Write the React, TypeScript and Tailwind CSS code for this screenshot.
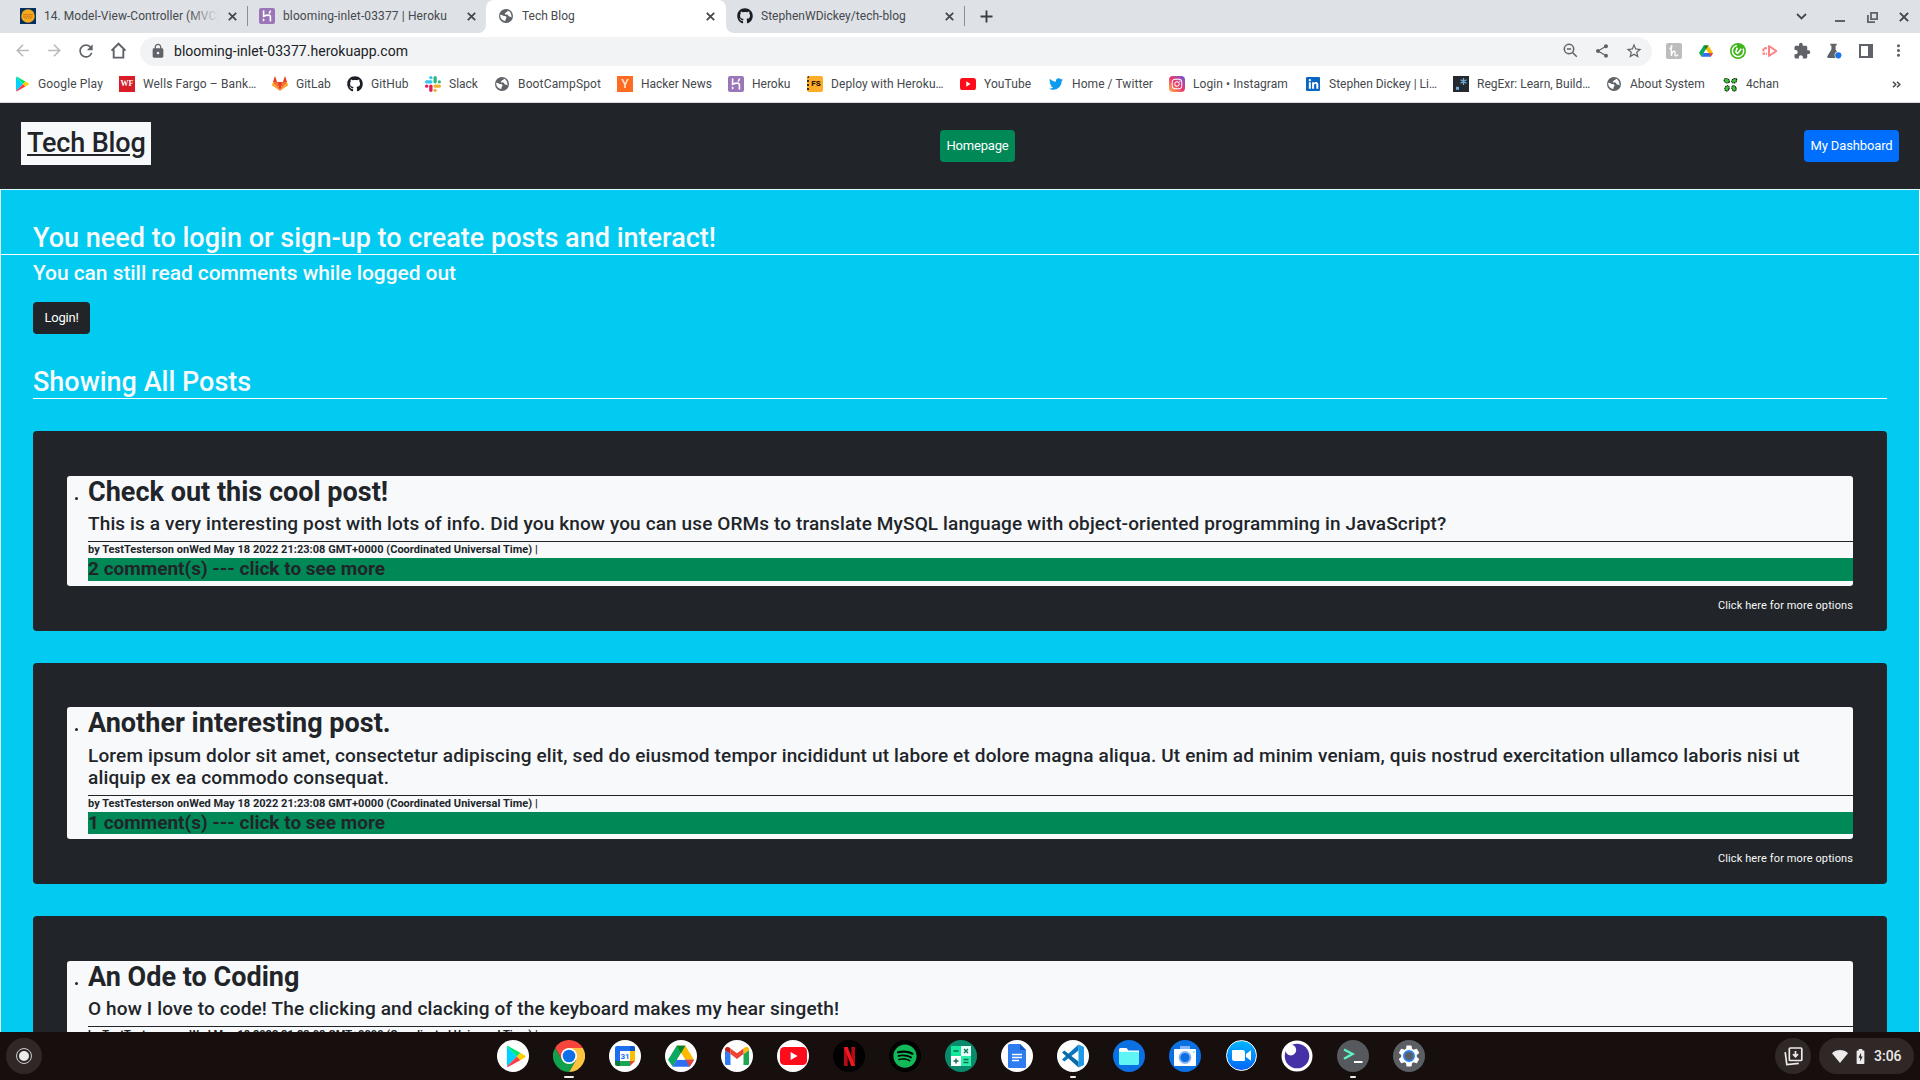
import type { ReactNode } from 'react'
import {
  MdArrowBack,
  MdArrowForward,
  MdRefresh,
  MdLock,
  MdShare,
  MdStarBorder,
  MdExtension,
  MdMoreVert,
  MdSettings,
} from 'react-icons/md'
import { FaGithub, FaTwitter, FaSpotify, FaInstagram, FaLinkedinIn } from 'react-icons/fa'

/* ---------- icons ---------- */

function Close({ w = 9, s = 1.8 }: { w?: number; s?: number }) {
  return (
    <svg width={w} height={w} viewBox="0 0 9 9" fill="none" stroke="#45494d" strokeWidth={s}>
      <path d="M.8.8l7.4 7.4M8.2.8L.8 8.2" />
    </svg>
  )
}

function Globe() {
  return (
    <svg width="14" height="14" viewBox="0 0 14 14">
      <circle cx="7" cy="7" r="7" fill="#5f6368" />
      <path
        d="M1.200 5.800l1.500.1c1 .1 1.300.9 2.200 1.100.9.200 1.900 0 2.400.8.400.7.100 1.400-.4 1.900-.5.500-.3 1.300-.6 2.200-2.700.2-5.400-2.700-5.100-6.100z"
        fill="#fff"
      />
      <path
        d="M8.700 1.400c.2 1-.3 1.500-1.200 1.700-.7.200-.6 1-1.300 1.200-.5.200-.6.700-.2 1 .8.400 2-.1 2.800.5.600.5.500 1.300 1.100 1.700.8.500 1.700.2 2.500.9.500-2.900-1-6-3.700-7z"
        fill="#fff"
      />
    </svg>
  )
}

function HerokuIcon() {
  return (
    <svg width="16" height="16" viewBox="0 0 16 16">
      <rect width="16" height="16" rx="2" fill="#9a76b8" />
      <path d="M4.600 2.500v5.800c2-.9 3.400-1.200 4.600-1.200 1.700 0 2.200.9 2.200 2v4.400M11.400 2.500c-.1 1.200-.6 2.100-1.300 3" fill="none" stroke="#fff" strokeWidth="1.600" />
      <path d="M3.800 10.200l2.200 1.800-2.200 1.800z" fill="#fff" />
    </svg>
  )
}

function PlayIcon({ size }: { size: number }) {
  return (
    <svg width={size} height={size} viewBox="0 0 24 24">
      <path d="M3 1.500v21L13.500 12z" fill="#00d2ff" />
      <path d="M3 1.500L13.500 12l3.600-3.800L4.600 1.200C4 .9 3.300 1 3 1.500z" fill="#00e676" />
      <path d="M3 22.500L13.500 12l3.600 3.800-12.500 7C4 23.100 3.300 23 3 22.500z" fill="#ff3a44" />
      <path d="M17.100 8.200L13.500 12l3.600 3.800 4.700-2.700c.9-.5.9-1.700 0-2.200z" fill="#ffd000" />
    </svg>
  )
}

function GitlabIcon() {
  return (
    <svg width="16" height="16" viewBox="0 0 24 24">
      <path d="M12 22.500L16.400 9H7.600z" fill="#e24329" />
      <path d="M12 22.500L7.600 9H1.400zM12 22.500L16.400 9h6.200z" fill="#fc6d26" />
      <path d="M1.400 9L.1 13.100c-.1.400 0 .8.300 1L12 22.500zM22.600 9l1.300 4.100c.1.400 0 .8-.3 1L12 22.500z" fill="#fca326" />
      <path d="M1.400 9h6.200L5 1c-.2-.5-.8-.5-1 0zM22.600 9h-6.200L19 1c.2-.5.800-.5 1 0z" fill="#e24329" />
    </svg>
  )
}

function SlackIcon() {
  return (
    <svg width="16" height="16" viewBox="0 0 24 24">
      <g fill="#e01e5a">
        <circle cx="2.500" cy="15.200" r="2.500" />
        <rect x="6.300" y="12.700" width="5" height="11.300" rx="2.500" />
      </g>
      <g fill="#36c5f0">
        <circle cx="8.800" cy="2.500" r="2.500" />
        <rect x="0" y="6.300" width="11.300" height="5" rx="2.500" />
      </g>
      <g fill="#2eb67d">
        <circle cx="21.500" cy="8.800" r="2.500" />
        <rect x="12.700" y="0" width="5" height="11.300" rx="2.500" />
      </g>
      <g fill="#ecb22e">
        <circle cx="15.200" cy="21.500" r="2.500" />
        <rect x="12.700" y="12.700" width="11.300" height="5" rx="2.500" />
      </g>
    </svg>
  )
}

function YoutubeIcon({ w, h }: { w: number; h: number }) {
  return (
    <svg width={w} height={h} viewBox="0 0 28 19" preserveAspectRatio="none">
      <rect width="28" height="19" rx="4.500" fill="#fd0d1b" />
      <path d="M11 5.300v8.400l7.200-4.200z" fill="#fff" />
    </svg>
  )
}

function DriveIcon({ size }: { size: number }) {
  return (
    <svg width={size} height={size} viewBox="0 0 24 24">
      <path d="M8 2.500h8L12 9.400 4.300 22 0 15.500z" fill="#0da960" />
      <path d="M8 2.500h8l8 13h-8z" fill="#ffba00" />
      <path d="M8 15.500h16L20 22H4.300z" fill="#2d6ff0" />
      <path d="M16.300 15.500H24L20 22z" fill="#ea4335" />
      <path d="M8 2.500h8l-4 6.900z" fill="#00832d" />
      <path d="M12 9.400l3.700 6.100H8.200z" fill="#fff" />
    </svg>
  )
}

function CloverIcon() {
  return (
    <svg width="15" height="15" viewBox="0 0 16 16" fill="#3fc63b" stroke="#0c1a0b" strokeWidth="1.100" strokeDasharray="1.500 .6">
      <ellipse cx="4" cy="4" rx="3" ry="2.200" transform="rotate(25 4 4)" />
      <ellipse cx="12" cy="4" rx="3" ry="2.200" transform="rotate(-35 12 4)" />
      <ellipse cx="4.300" cy="12" rx="2.200" ry="3" transform="rotate(25 4 12)" />
      <ellipse cx="11.700" cy="12" rx="2.200" ry="3" transform="rotate(-25 12 12)" />
    </svg>
  )
}

/* ---------- browser chrome ---------- */

function Tab({ icon, title, fade, tracking = '' }: { icon: ReactNode; title: string; fade?: boolean; tracking?: string }) {
  return (
    <div className="flex w-[220px] shrink-0 items-center">
      <span className="flex w-4 shrink-0 justify-center">{icon}</span>
      <span className={`relative ml-2 w-[175px] overflow-hidden whitespace-nowrap text-[12px] leading-4 text-[#45494d] ${tracking}`}>
        {title}
        {fade && <span className="absolute right-0 top-0 h-4 w-8 bg-gradient-to-r from-transparent to-[#dee1e6]" />}
      </span>
      <span className="ml-auto flex w-4 justify-center">
        <Close />
      </span>
    </div>
  )
}

function TabStrip() {
  return (
    <div className="flex h-[33px] bg-[#dee1e6]">
      <div className="w-[486px] bg-white">
        <div className="flex h-[33px] rounded-br-lg bg-[#dee1e6] pb-[1px] pl-5">
          <Tab
            fade
            tracking="tracking-[0.05px]"
            title="14. Model-View-Controller (MVC)"
            icon={
              <svg width="16" height="16" viewBox="0 0 16 16">
                <rect width="16" height="16" fill="#052f5f" />
                <circle cx="8" cy="8" r="6.800" fill="#f5a81c" />
                <path d="M3.500 6.500h9M3 8.200h10M4 10h8" stroke="#c26a1c" strokeWidth="1" strokeDasharray="1.400 .6" />
              </svg>
            }
          />
          <span className="ml-[7px] mt-[6px] h-5 w-px bg-[#8a8d91]" />
          <span className="ml-[11px] flex">
            <Tab title="blooming-inlet-03377 | Heroku" tracking="tracking-[0.12px]" icon={<HerokuIcon />} />
          </span>
        </div>
      </div>
      <div className="flex w-[240px] rounded-t-lg bg-white pb-[1px] pl-3">
        <Tab title="Tech Blog" icon={<Globe />} />
      </div>
      <div className="flex-1 bg-white">
        <div className="flex h-[33px] items-center rounded-bl-lg bg-[#dee1e6] pb-[1px] pl-[11px]">
          <Tab title="StephenWDickey/tech-blog" tracking="tracking-[0.03px]" icon={<FaGithub className="size-4 text-[#1b1f23]" />} />
          <span className="ml-[7px] h-5 w-px bg-[#8a8d91]" />
          <svg className="ml-[15px]" width="13" height="13" viewBox="0 0 13 13" stroke="#3c4043" strokeWidth="1.900">
            <path d="M6.500.5v12M.5 6.500h12" />
          </svg>
          <div className="ml-auto flex items-center pr-[11px]">
            <svg width="11" height="7" viewBox="0 0 11 7" fill="none" stroke="#45494d" strokeWidth="1.800">
              <path d="M1 1l4.500 4.500L10 1" />
            </svg>
            <span className="ml-[28px] mt-[9px] h-[2px] w-[10px] bg-[#5f6368]" />
            <svg className="ml-[22px] mt-[2px]" width="11" height="11" viewBox="0 0 11 11" fill="none" stroke="#5f6368" strokeWidth="1.800">
              <path d="M4 .9h6.100v6.200H4zM.9 3v7.100H8" />
            </svg>
            <span className="ml-[21px] mt-[2px]">
              <Close w={10} s={1.8} />
            </span>
          </div>
        </div>
      </div>
    </div>
  )
}

function Slot({ children }: { children: ReactNode }) {
  return <span className="flex w-8 shrink-0 items-center justify-center pb-[2px]">{children}</span>
}

function Toolbar() {
  return (
    <div className="flex h-[37px] items-center bg-white pl-[6px] text-[#5f6368]">
      <Slot>
        <MdArrowBack className="size-[19px] text-[#bababc]" />
      </Slot>
      <Slot>
        <MdArrowForward className="size-[19px] text-[#bababc]" />
      </Slot>
      <Slot>
        <MdRefresh className="size-5" />
      </Slot>
      <Slot>
        <svg width="17" height="17" viewBox="0 0 17 17" fill="none" stroke="#5f6368" strokeWidth="1.900">
          <path d="M1.500 8.600L8.500 1.700l7 6.900M3.700 7.500v8.100h9.600V7.500" />
        </svg>
      </Slot>
      <div className="ml-[6px] flex h-[29px] w-[1512px] items-center rounded-full bg-[#f1f3f4] pl-[10px]">
        <MdLock className="mb-[2px] size-4" />
        <span className="ml-2 pb-[2px] text-[14px] leading-5 tracking-[0.03px] text-[#202124]">blooming-inlet-03377.herokuapp.com</span>
        <div className="ml-auto flex pr-[2px]">
          <Slot>
            <svg width="15" height="15" viewBox="0 0 15 15" fill="none" stroke="#5f6368" strokeWidth="1.500">
              <circle cx="6" cy="6" r="4.700" />
              <path d="M9.500 9.500l4.300 4.300M3.900 6h4.200" />
            </svg>
          </Slot>
          <Slot>
            <MdShare className="size-4" />
          </Slot>
          <Slot>
            <MdStarBorder className="size-[18px]" />
          </Slot>
        </div>
      </div>
      <div className="ml-[6px] flex">
        <Slot>
          <svg width="16" height="16" viewBox="0 0 16 16">
            <rect width="16" height="16" rx="2" fill="#bdbdbd" />
            <path d="M4 5.500c1.500-.5 2.300-2.700 1.600-2.900-.5 0-.4 2.400-.3 5.400l.1 4.800c.3-2.600 1.500-4.600 2.700-4.600 1.500 0 .5 3 1 4.100.4.900 1.800.7 2.600-.4" fill="none" stroke="#fff" strokeWidth="1.400" strokeLinecap="round" />
          </svg>
        </Slot>
        <Slot>
          <DriveIcon size={14} />
        </Slot>
        <Slot>
          <svg width="16" height="16" viewBox="0 0 16 16">
            <circle cx="8" cy="8" r="8" fill="#3fb618" />
            <circle cx="8" cy="8" r="5.600" fill="none" stroke="#fff" strokeWidth="1.500" strokeDasharray="27 8.200" transform="rotate(-25 8 8)" />
            <path d="M7.300 4.800L6 8.300c-.3 1.500 1.300 2.300 2.400 1.400l2.800-4" fill="none" stroke="#fff" strokeWidth="1.600" />
          </svg>
        </Slot>
        <Slot>
          <svg width="16" height="14" viewBox="0 0 16 14" fill="none" stroke="#ff8080" strokeWidth="2">
            <path d="M7 2l7.300 5L7 12z" strokeLinejoin="round" />
            <path d="M5 4.300H1.500v5.400H5" strokeDasharray="3 .8" />
          </svg>
        </Slot>
        <Slot>
          <MdExtension className="size-[18px]" />
        </Slot>
        <Slot>
          <svg width="16" height="16" viewBox="0 0 16 16">
            <path d="M4.300.8h6.400v1.800H9.600v4l4 6.500c.6 1-.1 2-1.100 2H2.500c-1 0-1.700-1-1.100-2l4-6.500v-4H4.300z" fill="#5f6368" />
            <circle cx="12.300" cy="12.300" r="3.700" fill="#fff" />
            <circle cx="12.300" cy="12.300" r="3.100" fill="#1a73e8" />
          </svg>
        </Slot>
        <Slot>
          <svg width="14" height="14" viewBox="0 0 14 14">
            <path d="M1 1h12v12H1z" fill="none" stroke="#5f6368" strokeWidth="2" />
            <path d="M9 1h4v12H9z" fill="#5f6368" />
          </svg>
        </Slot>
        <Slot>
          <MdMoreVert className="size-[19px]" />
        </Slot>
      </div>
    </div>
  )
}

const bookmarks: { label: string; w: string; icon: ReactNode }[] = [
  { label: 'Google Play', w: 'w-[65px] tracking-[0.14px]', icon: <PlayIcon size={16} /> },
  {
    label: 'Wells Fargo – Bank…',
    w: 'w-[113px] tracking-[0.13px]',
    icon: (
      <span className="flex size-4 items-center justify-center bg-[#d71e28] font-['Liberation_Serif'] text-[8px] font-bold text-white">WF</span>
    ),
  },
  { label: 'GitLab', w: 'w-[35px]', icon: <GitlabIcon /> },
  { label: 'GitHub', w: 'w-[38px] tracking-[0.1px]', icon: <FaGithub className="size-4 text-[#1b1f23]" /> },
  { label: 'Slack', w: 'w-[29px]', icon: <SlackIcon /> },
  { label: 'BootCampSpot', w: 'w-[83px] tracking-[0.15px]', icon: <Globe /> },
  {
    label: 'Hacker News',
    w: 'w-[71px]',
    icon: <span className="flex size-4 items-center justify-center bg-[#ff6c21] text-[12px] leading-4 text-white">Y</span>,
  },
  { label: 'Heroku', w: 'w-[39px]', icon: <HerokuIcon /> },
  {
    label: 'Deploy with Heroku…',
    w: 'w-[113px] tracking-[0.08px]',
    icon: (
      <span className="flex size-4 items-center justify-center rounded-[2px] border-l-2 border-dotted border-[#3d2b10] bg-[#ffad29] text-[8px] font-black leading-4 text-[#2a1c08]">
        FS
      </span>
    ),
  },
  { label: 'YouTube', w: 'w-[48px] tracking-[0.1px]', icon: <YoutubeIcon w={16} h={12} /> },
  { label: 'Home / Twitter', w: 'w-[81px] tracking-[0.07px]', icon: <FaTwitter className="size-[14px] text-[#0d9bf0]" /> },
  {
    label: 'Login • Instagram',
    w: 'w-[96px] tracking-[0.07px]',
    icon: (
      <span className="flex size-4 items-center justify-center rounded bg-gradient-to-tr from-[#fdb03c] via-[#e8316c] to-[#6a45dc]">
        <FaInstagram className="size-3 text-white" />
      </span>
    ),
  },
  {
    label: 'Stephen Dickey | Li…',
    w: 'w-[108px]',
    icon: (
      <span className="flex size-[14px] items-center justify-center rounded-[1px] bg-[#0a66c2]">
        <FaLinkedinIn className="size-[11px] text-white" />
      </span>
    ),
  },
  {
    label: 'RegExr: Learn, Build…',
    w: 'w-[113px]',
    icon: (
      <svg width="16" height="16" viewBox="0 0 16 16">
        <rect width="16" height="16" fill="#23292f" />
        <path d="M10.500 2v7M7.500 3.700l6 3.500M13.500 3.700l-6 3.500" stroke="#70b0e0" strokeWidth="1.300" />
        <rect x="3" y="10.800" width="3" height="3" fill="#70b0e0" />
      </svg>
    ),
  },
  { label: 'About System', w: 'w-[76px]', icon: <Globe /> },
  { label: '4chan', w: 'w-[34px]', icon: <CloverIcon /> },
]

function BookmarksBar() {
  return (
    <div className="flex h-[33px] items-center border-b border-[#d5d7da] bg-white pb-[4px] pl-[14px]">
      <div className="flex gap-4">
        {bookmarks.map((b) => (
          <div key={b.label} className="flex items-center gap-2">
            <span className="flex w-4 shrink-0 justify-center">{b.icon}</span>
            <span className={`whitespace-nowrap text-[12px] leading-4 text-[#45494d] ${b.w}`}>{b.label}</span>
          </div>
        ))}
      </div>
      <svg className="ml-auto mr-[19px]" width="9" height="7" viewBox="0 0 9 7" fill="none" stroke="#45494d" strokeWidth="1.500">
        <path d="M1 .7l2.800 2.800L1 6.300M5 .7l2.800 2.800L5 6.300" />
      </svg>
    </div>
  )
}

/* ---------- web page ---------- */

interface Post {
  title: string
  body: string
  comments?: number
  bodyBox: string
  barBox: string
}

const posts: Post[] = [
  {
    title: 'Check out this cool post!',
    body: 'This is a very interesting post with lots of info. Did you know you can use ORMs to translate MySQL language with object-oriented programming in JavaScript?',
    comments: 2,
    bodyBox: 'h-[33px] pt-[5px] tracking-[0.12px]',
    barBox: 'h-[23px]',
  },
  {
    title: 'Another interesting post.',
    body: 'Lorem ipsum dolor sit amet, consectetur adipiscing elit, sed do eiusmod tempor incididunt ut labore et dolore magna aliqua. Ut enim ad minim veniam, quis nostrud exercitation ullamco laboris nisi ut aliquip ex ea commodo consequat.',
    comments: 1,
    bodyBox: 'h-14 pt-[6px] tracking-[0.155px]',
    barBox: 'h-[22px]',
  },
  {
    title: 'An Ode to Coding',
    body: 'O how I love to code! The clicking and clacking of the keyboard makes my hear singeth!',
    bodyBox: 'h-[33px] pt-[5px] tracking-[0.145px]',
    barBox: 'h-[23px]',
  },
]

function PostCard({ post, top }: { post: Post; top: string }) {
  return (
    <article className={`mb-8 rounded bg-[#212529] px-[34px] pb-[14px] ${top}`}>
      <div className="flex rounded-[3px] bg-[#f8f9fb] pb-[5px] pl-2">
        <span className="mt-[21px] size-[3px] rounded-full bg-[#212529]" />
        <div className="ml-[10px] flex-1 text-[#212529]">
          <h2 className="h-8 text-[27px] font-bold leading-8 tracking-[0.01px]">{post.title}</h2>
          <p className={`text-[19px] font-medium leading-[22px] ${post.bodyBox}`}>{post.body}</p>
          <p className="h-[17px] border-t border-[#212529] text-[11px] font-bold leading-[15px] tracking-[0.035px]">
            by TestTesterson onWed May 18 2022 21:23:08 GMT+0000 (Coordinated Universal Time) |
          </p>
          {post.comments !== undefined && (
            <p className={`bg-[#008857] text-[19px] font-bold leading-[22px] ${post.barBox}`}>{post.comments} comment(s) --- click to see more</p>
          )}
        </div>
      </div>
      {post.comments !== undefined && (
        <p className="mt-3 h-[19px] text-right text-[11px] leading-4 tracking-[0.11px] text-[#f8f9fa]">Click here for more options</p>
      )}
    </article>
  )
}

function WebPage() {
  return (
    <div className="flex h-[929px] flex-col overflow-hidden">
      <header className="flex h-[86px] shrink-0 items-start justify-between bg-[#212529] px-[21px] pt-[19px]">
        <div className="h-[43px] w-[130px] bg-[#f8f9fb] pl-[6px] pt-[5px] text-[27px] font-medium leading-8 tracking-[-0.15px] text-[#212529] underline decoration-2 underline-offset-2">
          Tech Blog
        </div>
        <button className="mt-2 h-8 w-[75px] rounded bg-[#008857] text-[13px] tracking-[-0.17px] text-white">Homepage</button>
        <button className="mt-2 h-8 w-[95px] rounded bg-[#006ffd] text-[13px] tracking-[-0.13px] text-white">My Dashboard</button>
      </header>
      <main className="flex-1 border border-b-0 border-[#e4f8fd] bg-[#02cbf1] pt-8 text-[#f8f9fa]">
        <h1 className="border-b border-white pl-8 text-[27px] font-medium leading-8 tracking-[0.015px]">
          You need to login or sign-up to create posts and interact!
        </h1>
        <div className="px-8">
          <h3 className="mt-[6px] h-6 text-[21px] font-medium leading-[25px] tracking-[-0.066px]">You can still read comments while logged out</h3>
          <button className="mt-[17px] block h-8 w-[57px] rounded bg-[#212529] text-[13px] tracking-[-0.2px] text-white">Login!</button>
          <h1 className="mb-8 mt-8 border-b border-white text-[27px] font-medium leading-8">Showing All Posts</h1>
          <PostCard post={posts[0]} top="pt-[45px]" />
          <PostCard post={posts[1]} top="pt-11" />
          <PostCard post={posts[2]} top="pt-[45px]" />
        </div>
      </main>
    </div>
  )
}

/* ---------- shelf ---------- */

function Round({ bg, children }: { bg: string; children?: ReactNode }) {
  return <span className={`flex size-8 items-center justify-center overflow-hidden rounded-full ${bg}`}>{children}</span>
}

const apps: { id: string; icon: ReactNode; mark?: string }[] = [
  {
    id: 'play',
    icon: (
      <Round bg="bg-white">
        <span className="ml-1 flex">
          <PlayIcon size={23} />
        </span>
      </Round>
    ),
  },
  {
    id: 'chrome',
    mark: 'w-[10px]',
    icon: (
      <svg width="32" height="32" viewBox="0 0 48 48">
        <path d="M3.200 12A24 24 0 0 1 44.800 12H24L13.600 30z" fill="#f6453c" />
        <path d="M44.800 12A24 24 0 0 1 24 48l10.400-18L24 12z" fill="#fcc43f" />
        <path d="M24 48A24 24 0 0 1 3.200 12l10.400 18h20.800z" fill="#11a04b" />
        <circle cx="24" cy="24" r="12" fill="#fff" />
        <circle cx="24" cy="24" r="9.500" fill="#0e6fe8" />
      </svg>
    ),
  },
  {
    id: 'calendar',
    icon: (
      <Round bg="bg-white">
        <svg width="20" height="20" viewBox="0 0 20 20">
          <path d="M2 0h16a2 2 0 0 1 2 2v13H0V2a2 2 0 0 1 2-2z" fill="#1c6fee" />
          <path d="M15 5h5v10h-5z" fill="#fbbc04" />
          <path d="M15 0h3a2 2 0 0 1 2 2v3h-5z" fill="#1058c8" />
          <path d="M5 15h10v5H5z" fill="#18a554" />
          <path d="M0 15h5v5H2a2 2 0 0 1-2-2z" fill="#0b7a3c" />
          <path d="M15 15h5l-5 5z" fill="#ea4335" />
          <path d="M5 5h10v10H5z" fill="#fff" />
          <text x="10" y="13" fontSize="8" fontWeight="700" textAnchor="middle" fill="#1c6fee" fontFamily="Roboto">
            31
          </text>
        </svg>
      </Round>
    ),
  },
  {
    id: 'drive',
    icon: (
      <Round bg="bg-white">
        <DriveIcon size={26} />
      </Round>
    ),
  },
  {
    id: 'gmail',
    icon: (
      <Round bg="bg-white">
        <svg width="24" height="18" viewBox="0 0 24 18">
          <path d="M0 3v13.400C0 17.300.7 18 1.600 18h3.900V7z" fill="#2f7df4" />
          <path d="M24 3v13.400c0 .9-.7 1.600-1.600 1.600h-3.900V7z" fill="#1fa651" />
          <path d="M18.500 7L24 3.200V2.500C24 .2 21.400-.8 19.600.6l-1.100.8z" fill="#fbbc04" />
          <path d="M5.500 7L0 3.200V2.500C0 .2 2.600-.8 4.400.6l1.100.8z" fill="#c5221f" />
          <path d="M5.500 1.400L12 6.300l6.500-4.900V7L12 12 5.500 7z" fill="#ec4435" />
        </svg>
      </Round>
    ),
  },
  {
    id: 'youtube',
    icon: (
      <Round bg="bg-white">
        <YoutubeIcon w={27} h={18} />
      </Round>
    ),
  },
  {
    id: 'netflix',
    icon: (
      <Round bg="bg-black">
        <svg width="11" height="19" viewBox="0 0 12 19" preserveAspectRatio="none">
          <path d="M0 0h4v19H0zM8 0h4v19H8z" fill="#b40a14" />
          <path d="M0 0h4l8 19H8z" fill="#f01822" />
        </svg>
      </Round>
    ),
  },
  {
    id: 'spotify',
    icon: (
      <Round bg="bg-black">
        <FaSpotify className="size-6 text-[#12b958]" />
      </Round>
    ),
  },
  {
    id: 'calculator',
    icon: (
      <Round bg="bg-[#0a8a6c]">
        <svg width="20" height="20" viewBox="0 0 20 20">
          <path d="M0 0h10v10H0z" fill="#14e89a" />
          <path d="M10 0h10v10H10z" fill="#e8fff5" />
          <path d="M0 10h10v10H0z" fill="#fff" />
          <path d="M10 10h10v10H10z" fill="#2df0a8" />
          <path d="M2.500 5h5M2.500 15h5M5 12.500v5M13 3l4 4M17 3l-4 4M12.500 13.500h5M12.500 16.500h5" stroke="#07705a" strokeWidth="1.400" />
        </svg>
      </Round>
    ),
  },
  {
    id: 'docs',
    icon: (
      <Round bg="bg-white">
        <svg width="18" height="24" viewBox="0 0 18 24">
          <path d="M1.500 0H12l6 6v16.500a1.500 1.500 0 0 1-1.500 1.500h-15A1.500 1.500 0 0 1 0 22.500v-21A1.500 1.500 0 0 1 1.500 0z" fill="#2d7df0" />
          <path d="M12 0l6 6h-6z" fill="#1256c0" />
          <path d="M4 10.500h10M4 13.500h10M4 16.500h7" stroke="#fff" strokeWidth="1.400" />
        </svg>
      </Round>
    ),
  },
  {
    id: 'vscode',
    mark: 'w-[6px]',
    icon: (
      <Round bg="bg-white">
        <svg width="24" height="24" viewBox="0 0 24 24">
          <path d="M17.500.5L23 3v18l-5.500 2.500z" fill="#1e9be8" />
          <path d="M17.500.5L1 15.500l2.300 2L17.500 6.500z" fill="#0a78be" />
          <path d="M17.500 23.500L1 8.500l2.300-2 14.200 11z" fill="#0a69a8" />
        </svg>
      </Round>
    ),
  },
  {
    id: 'files',
    icon: (
      <Round bg="bg-[#0b70e2]">
        <svg width="20" height="17" viewBox="0 0 20 17">
          <path d="M1.500 0h6l2 2.500H20V8H0V1.500A1.500 1.500 0 0 1 1.500 0z" fill="#fff" />
          <path d="M0 3.800h18.500A1.500 1.500 0 0 1 20 5.300v10.200a1.500 1.500 0 0 1-1.500 1.500h-17A1.500 1.500 0 0 1 0 15.500z" fill="#5ff5f5" />
        </svg>
      </Round>
    ),
  },
  {
    id: 'camera',
    icon: (
      <Round bg="bg-[#0b70e2]">
        <svg width="22" height="20" viewBox="0 0 22 20">
          <path d="M6 0h10v5H6z" fill="#8ab4f8" />
          <rect y="3" width="22" height="17" rx="1" fill="#fff" />
          <circle cx="11" cy="11.500" r="5.500" fill="#0b70e2" stroke="#8ab4f8" strokeWidth="1.800" />
          <circle cx="19.800" cy="6" r="1" fill="#5ff5f5" />
        </svg>
      </Round>
    ),
  },
  {
    id: 'zoom',
    icon: (
      <span className="mb-px flex size-[31px] items-center justify-center rounded-full border border-white bg-gradient-to-b from-[#00b4ff] to-[#0b63f8]">
        <svg width="19" height="11" viewBox="0 0 19 11" fill="#fff">
          <path d="M0 1a1 1 0 0 1 1-1h9.500A2.500 2.500 0 0 1 13 2.500V10a1 1 0 0 1-1 1H2.500A2.500 2.500 0 0 1 0 8.500zM14 4l5-3.700v10.400L14 7z" />
        </svg>
      </span>
    ),
  },
  {
    id: 'insomnia',
    icon: (
      <svg width="32" height="32" viewBox="0 0 32 32">
        <circle cx="16" cy="16" r="15.500" fill="#fff" />
        <circle cx="16" cy="16" r="12.300" fill="#4630a8" />
        <circle cx="9.800" cy="10" r="5.400" fill="#fff" />
      </svg>
    ),
  },
  {
    id: 'terminal',
    mark: 'w-[6px]',
    icon: (
      <Round bg="bg-[#565a5e]">
        <svg width="20" height="16" viewBox="0 0 20 16" fill="none">
          <path d="M1 1.500L9.500 6 1 10.800" stroke="#5df2c0" strokeWidth="2.400" />
          <path d="M11 14h8.500" stroke="#fff" strokeWidth="2.200" />
        </svg>
      </Round>
    ),
  },
  {
    id: 'settings',
    icon: (
      <Round bg="bg-[#5b5f64]">
        <span className="relative flex items-center justify-center">
          <MdSettings className="size-[26px] text-white" />
          <span className="absolute size-[12px] rounded-full border-[2.5px] border-[#2f80f0] bg-[#5b5f64]" />
        </span>
      </Round>
    ),
  },
]

function Shelf() {
  return (
    <footer className="flex h-12 items-center bg-[#170f0e] px-[6px]">
      <div className="flex w-[479px] shrink-0">
        <span className="flex size-9 items-center justify-center rounded-full bg-[#302827]">
          <span className="flex size-4 items-center justify-center rounded-full border border-[#cfcccc]">
            <span className="size-[10px] rounded-full bg-[#eceaea]" />
          </span>
        </span>
      </div>
      {apps.map((a) => (
        <span key={a.id} className="relative flex h-12 w-14 shrink-0 items-center justify-center">
          {a.icon}
          {a.mark && <span className={`absolute bottom-[2px] h-[2px] rounded-full bg-[#f1eeee] ${a.mark}`} />}
        </span>
      ))}
      <div className="ml-auto flex items-center gap-2 text-[#eceaea]">
        <span className="flex size-9 items-center justify-center rounded-full bg-[#302827]">
          <svg width="19" height="19" viewBox="0 0 19 19" fill="none" stroke="#eceaea" strokeWidth="1.700">
            <rect x="5.300" y="1" width="12.500" height="12.500" rx="1" />
            <path d="M1.200 5.200l1.600 12.300 12-1.200M11.500 4v5M9 7.200l2.500 2.500L14 7.200" />
          </svg>
        </span>
        <span className="flex h-9 w-[95px] items-center rounded-full bg-[#302827] pl-[13px]">
          <svg width="16" height="13" viewBox="0 0 16 13" fill="#eceaea">
            <path d="M8 13L0 3.200C2.200 1.200 5 0 8 0s5.800 1.200 8 3.200z" />
          </svg>
          <svg className="ml-2" width="9" height="15" viewBox="0 0 10 15" preserveAspectRatio="none">
            <path d="M3 0h4v1.500h1.500a.8.800 0 0 1 .8.800v11.900a.8.800 0 0 1-.8.800h-7a.8.800 0 0 1-.8-.8V2.300a.8.800 0 0 1 .8-.8H3z" fill="#eceaea" />
            <path d="M5.600 3.800L2.800 8.800h1.800v3.600l2.800-5H5.600z" fill="#302827" />
          </svg>
          <span className="ml-[9px] text-[14px] font-medium leading-4">3:06</span>
        </span>
      </div>
    </footer>
  )
}

export default function App() {
  return (
    <div className="h-[1080px] w-[1920px] overflow-hidden bg-white font-['Roboto',sans-serif]">
      <TabStrip />
      <Toolbar />
      <BookmarksBar />
      <WebPage />
      <Shelf />
    </div>
  )
}
